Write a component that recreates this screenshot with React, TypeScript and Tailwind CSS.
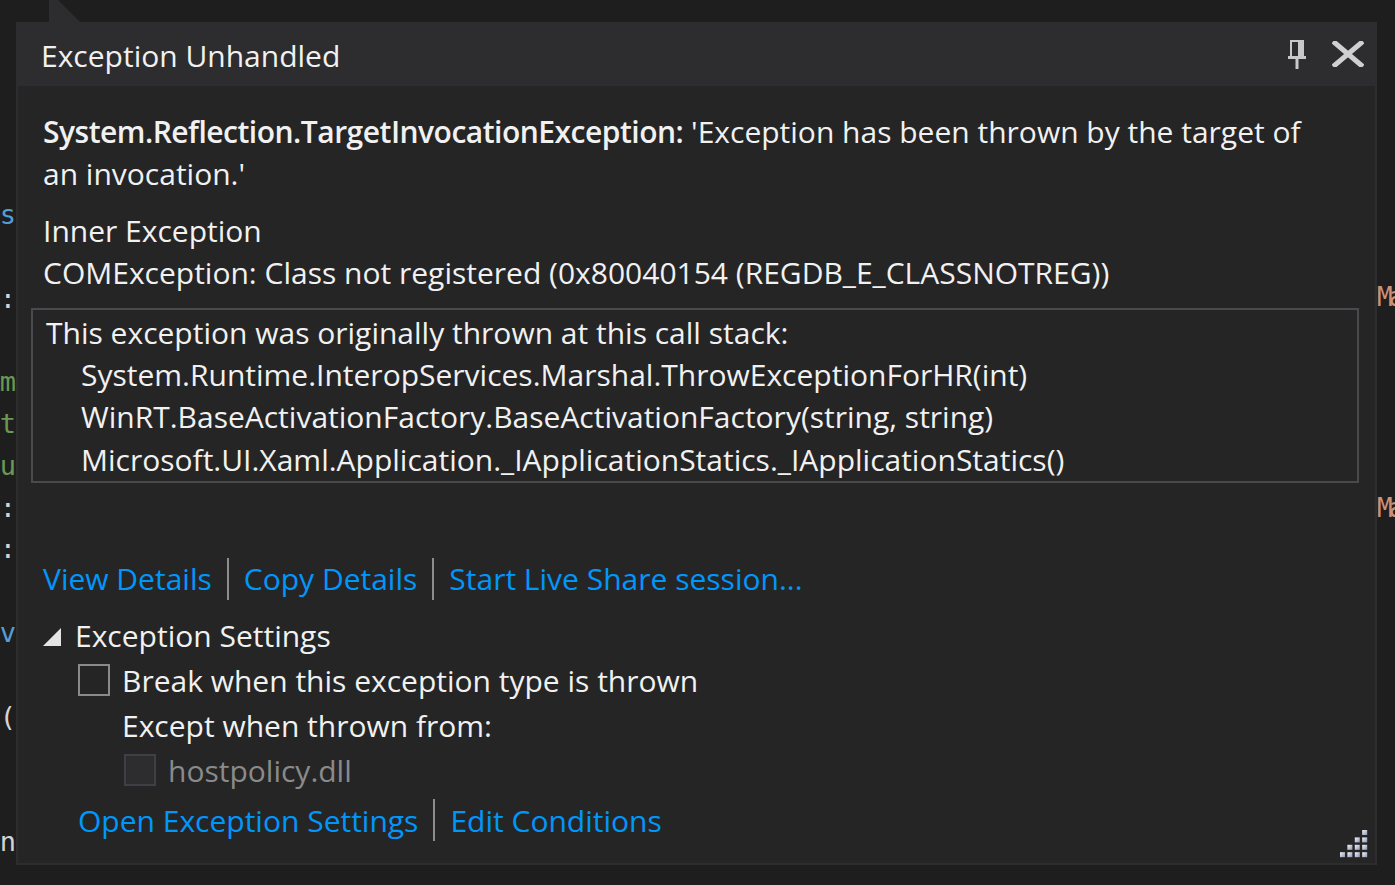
import { useState } from "react";

const leftCode = [
  { ch: "s", color: "text-[#569cd6]" },
  { ch: "", color: "" },
  { ch: ":", color: "text-[#d4d4d4]" },
  { ch: "", color: "" },
  { ch: "m", color: "text-[#6a9955]" },
  { ch: "t", color: "text-[#6a9955]" },
  { ch: "u", color: "text-[#6a9955]" },
  { ch: ":", color: "text-[#d4d4d4]" },
  { ch: ":", color: "text-[#d4d4d4]" },
  { ch: "", color: "" },
  { ch: "v", color: "text-[#569cd6]" },
  { ch: "", color: "" },
  { ch: "(", color: "text-[#d4d4d4]" },
  { ch: "", color: "" },
  { ch: "", color: "" },
  { ch: "n", color: "text-[#d4d4d4]" },
];

const stack = [
  "System.Runtime.InteropServices.Marshal.ThrowExceptionForHR(int)",
  "WinRT.BaseActivationFactory.BaseActivationFactory(string, string)",
  "Microsoft.UI.Xaml.Application._IApplicationStatics._IApplicationStatics()",
];

function PinIcon() {
  return (
    <svg width="18" height="30" viewBox="0 0 18 30">
      <rect x="3" y="1" width="12" height="16" fill="none" stroke="#c8c8c8" strokeWidth="2" />
      <rect x="10" y="1" width="5" height="16" fill="#c8c8c8" />
      <rect x="0" y="16" width="18" height="3" fill="#c8c8c8" />
      <rect x="7.5" y="19" width="3" height="10" fill="#c8c8c8" />
    </svg>
  );
}

function CloseIcon() {
  return (
    <svg width="32" height="26" viewBox="0 0 32 26">
      <path d="M3 2 L29 24 M29 2 L3 24" stroke="#d0d0d0" strokeWidth="5" strokeLinecap="square" />
    </svg>
  );
}

function Grip() {
  const dots = [
    [3, 0],
    [2, 1], [3, 1],
    [1, 2], [2, 2], [3, 2],
    [0, 3], [1, 3], [2, 3], [3, 3],
  ];
  return (
    <svg width="28" height="28" viewBox="0 0 28 28">
      <defs>
        <linearGradient id="g" x1="0" y1="0" x2="1" y2="1">
          <stop offset="0" stopColor="#f4f6fb" />
          <stop offset="1" stopColor="#8c96b4" />
        </linearGradient>
      </defs>
      {dots.map(([c, r]) => (
        <rect key={`${c}-${r}`} x={c * 7.4} y={r * 7.4} width="5" height="5" fill="url(#g)" />
      ))}
    </svg>
  );
}

function Sep() {
  return <span className="mx-[15px] w-[2px] h-[42px] bg-[#8c8c8c]" />;
}

export default function App() {
  const [brk, setBrk] = useState(false);

  return (
    <div className="w-[1395px] h-[885px] bg-[#1e1e1e] flex overflow-hidden font-['Open_Sans','Noto_Sans',sans-serif] text-[#f1f1f1] text-[30px]">
      {/* editor gutter on the left */}
      <div className="w-[16px] shrink-0 pt-[194px] flex flex-col overflow-hidden font-['DejaVu_Sans_Mono',monospace] text-[27px]">
        {leftCode.map((l, i) => (
          <div key={i} className={`h-[41.8px] leading-[41.8px] flex justify-end whitespace-nowrap ${l.color}`}>
            {l.ch}
          </div>
        ))}
      </div>

      <div className="w-[1361px] shrink-0 flex flex-col">
        <div className="h-[22px] pl-[33px]">
          <svg width="31" height="22" viewBox="0 0 31 22">
            <polygon points="0,0 9,0 31,22 0,22" fill="#2d2d30" />
          </svg>
        </div>

        <div className="h-[843px] border-2 border-t-0 border-[#2d2d30] bg-[#252526] flex flex-col">
          <div className="h-[64px] bg-[#2d2d30] flex items-center pl-[23px] pr-[10px]">
            <span className="text-[30px] flex-1 leading-[40px] mt-[4px]">Exception Unhandled</span>
            <span className="mr-[26px] mt-[1px]"><PinIcon /></span>
            <span className="mr-[1px]"><CloseIcon /></span>
          </div>

          <div className="flex-1 flex flex-col pl-[25px] pr-[16px] pt-[25px] relative">
            <div className="leading-[42px] whitespace-nowrap">
              <span className="font-semibold tracking-[-0.5px]">System.Reflection.TargetInvocationException:</span>{" "}
              'Exception has been thrown by the target of
              <br />
              an invocation.'
            </div>

            <div className="mt-[15px] leading-[42px]">Inner Exception</div>
            <div className="leading-[42px] whitespace-nowrap">COMException: Class not registered (0x80040154 (REGDB_E_CLASSNOTREG))</div>

            <div className="mt-[14px] ml-[-12px] border-2 border-[#4a4a4e] pt-[2px] pl-[13px]">
              <div className="leading-[42px]">This exception was originally thrown at this call stack:</div>
              {stack.map((s) => (
                <div key={s} className="leading-[42.3px] pl-[35px] whitespace-nowrap">{s}</div>
              ))}
            </div>

            <div className="mt-[75px] flex items-center text-[#0097fb] leading-[42px]">
              <span>View Details</span>
              <Sep />
              <span>Copy Details</span>
              <Sep />
              <span>Start Live Share session...</span>
            </div>

            <div className="mt-[13px] flex items-center leading-[45px]">
              <svg width="18" height="18" viewBox="0 0 18 18" className="mt-[4px]">
                <polygon points="18,0 18,18 0,18" fill="#e4e4e4" />
              </svg>
              <span className="ml-[14px]">Exception Settings</span>
            </div>

            <div className="pl-[35px] flex flex-col">
              <label className="flex items-center leading-[45px]">
                <button
                  type="button"
                  onClick={() => setBrk(!brk)}
                  className="w-[32px] h-[32px] border-2 border-[#8a8a8a] bg-[#252526]"
                />
                <span className="ml-[12px]">Break when this exception type is thrown</span>
              </label>
              <div className="pl-[44px] leading-[45px]">Except when thrown from:</div>
              <div className="pl-[46px] flex items-center leading-[45px]">
                <span className="w-[32px] h-[32px] border-2 border-[#3f3f46] bg-[#2d2d30]" />
                <span className="ml-[12px] text-[#8a8a8a]">hostpolicy.dll</span>
              </div>
              <div className="mt-[5px] flex items-center text-[#0097fb] leading-[45px]">
                <span>Open Exception Settings</span>
                <Sep />
                <span>Edit Conditions</span>
              </div>
            </div>

            <div className="absolute right-[7px] bottom-[5px]">
              <Grip />
            </div>
          </div>
        </div>
      </div>

      {/* editor on the right */}
      <div className="flex-1 pt-[276px] flex flex-col font-['DejaVu_Sans_Mono',monospace] text-[26px] tracking-[-4px] text-[#ce9178] overflow-hidden">
        <div className="h-[42px] leading-[42px] whitespace-nowrap">Ma</div>
        <div className="h-[169px]" />
        <div className="h-[42px] leading-[42px] whitespace-nowrap">Ma</div>
      </div>
    </div>
  );
}
